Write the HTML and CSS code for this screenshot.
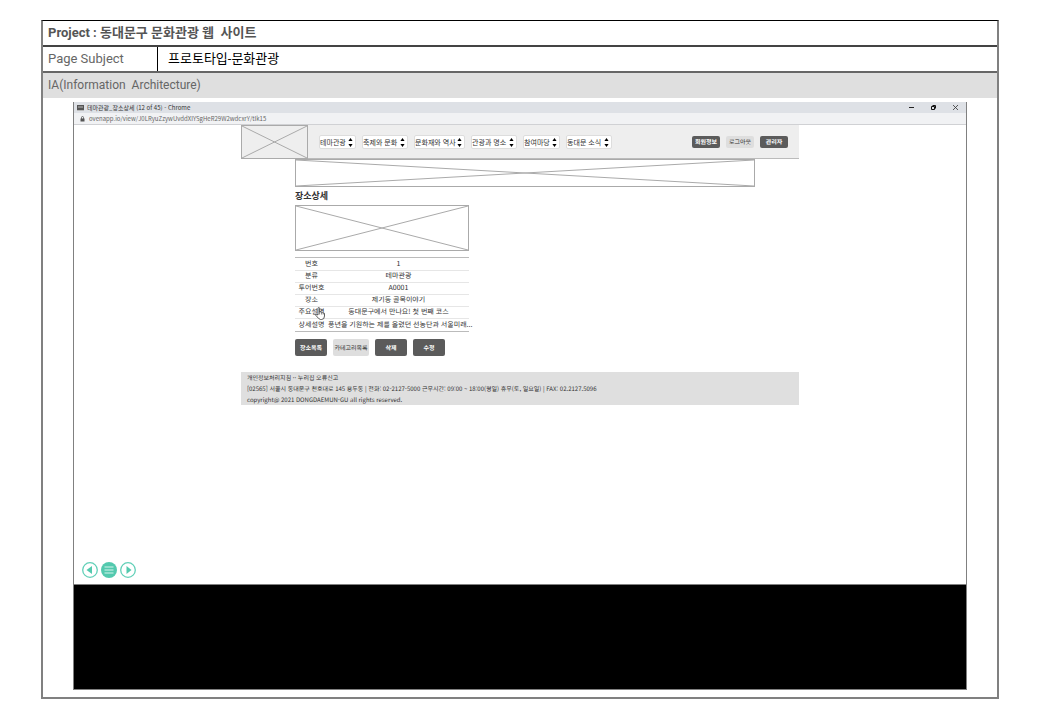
FILE: index.html
```html
<!DOCTYPE html>
<html lang="ko">
<head>
<meta charset="utf-8">
<title>동대문구 문화관광 웹 사이트</title>
<link rel="stylesheet" href="styles.css">
</head>
<body>
<div class="sheet">
  <h1 class="project">Project : 동대문구 문화관광 웹&nbsp; 사이트</h1>
  <div class="subject">
    <div class="subject-label">Page Subject</div>
    <div class="subject-value">프로토타입-문화관광</div>
  </div>
  <h2 class="section">IA(Information&nbsp; Architecture)</h2>
  <div class="window">
    <div class="titlebar">
      <svg class="tab-icon" viewBox="0 0 7 6"><rect width="7" height="5" fill="#555"/><path d="M1 2h5M0 5.5h7" stroke="#bbb"/></svg>
      <span class="tab-title">테마관광_장소상세 (12 of 45) - Chrome</span>
      <div class="controls">
        <svg viewBox="0 0 7 7"><path d="M1 3.5h5" stroke="#222"/></svg>
        <svg viewBox="0 0 7 7"><path d="M2.5 1.5h3v3M1.5 2.5h3v3h-3z" fill="none" stroke="#111"/></svg>
        <svg viewBox="0 0 7 7"><path d="M1 1l5 5M6 1L1 6" stroke="#333" stroke-width=".8"/></svg>
      </div>
    </div>
    <div class="urlbar">
      <svg class="lock" viewBox="0 0 5 6"><path d="M1.5 3V1.5a1 1 0 0 1 2 0V3" fill="none" stroke="#555" stroke-width=".8"/><rect x=".5" y="2.5" width="4" height="3" fill="#555"/></svg>
      <span>ovenapp.io/view/J0LRyuZzywUvddXIYSgHeR29W2wdcxrY/tIk15</span>
    </div>
    <div class="viewport">
      <div class="page">
        <header class="site-header">
          <svg class="crossed logo" viewBox="0 0 100 100" preserveAspectRatio="none"><path d="M0 0L100 100M100 0L0 100"/></svg>
          <nav class="menu">
            <label class="pick short"><select aria-label="테마관광"><option>테마관광</option></select><svg viewBox="0 0 5 9"><path d="M2.5 0L4.6 3H.4zM2.5 9L4.6 6H.4z"/></svg></label>
            <label class="pick medium"><select aria-label="축제와 문화"><option>축제와 문화</option></select><svg viewBox="0 0 5 9"><path d="M2.5 0L4.6 3H.4zM2.5 9L4.6 6H.4z"/></svg></label>
            <label class="pick long"><select aria-label="문화재와 역사"><option>문화재와 역사</option></select><svg viewBox="0 0 5 9"><path d="M2.5 0L4.6 3H.4zM2.5 9L4.6 6H.4z"/></svg></label>
            <label class="pick medium"><select aria-label="관광과 명소"><option>관광과 명소</option></select><svg viewBox="0 0 5 9"><path d="M2.5 0L4.6 3H.4zM2.5 9L4.6 6H.4z"/></svg></label>
            <label class="pick short"><select aria-label="참여마당"><option>참여마당</option></select><svg viewBox="0 0 5 9"><path d="M2.5 0L4.6 3H.4zM2.5 9L4.6 6H.4z"/></svg></label>
            <label class="pick medium"><select aria-label="동대문 소식"><option>동대문 소식</option></select><svg viewBox="0 0 5 9"><path d="M2.5 0L4.6 3H.4zM2.5 9L4.6 6H.4z"/></svg></label>
          </nav>
          <div class="account">
            <button class="btn small">회원정보</button>
            <button class="btn small light">로그아웃</button>
            <button class="btn small">관리자</button>
          </div>
        </header>
        <main class="content">
          <svg class="crossed banner" viewBox="0 0 100 100" preserveAspectRatio="none"><path d="M0 0L100 100M100 0L0 100"/></svg>
          <section class="place">
            <h3>장소상세</h3>
            <svg class="crossed photo" viewBox="0 0 100 100" preserveAspectRatio="none"><path d="M0 0L100 100M100 0L0 100"/></svg>
            <table>
              <tr><th scope="row">번호</th><td>1</td></tr>
              <tr><th scope="row">분류</th><td>테마관광</td></tr>
              <tr><th scope="row">투어번호</th><td>A0001</td></tr>
              <tr><th scope="row">장소</th><td>제기동 골목이야기</td></tr>
              <tr><th scope="row" class="hovered">주요설명<svg class="hand" viewBox="0 0 10 13"><path d="M3 8V1.500q0-1 .8-1t.8 1V5q1.500-.6 2 .3 1.300-.4 1.600.5 1.300-.1 1.300 1V9q0 3.500-3 3.500H5.500Q4 12.500.7 8.200q-.3-1 .8-.9z" fill="#fff" stroke="#333" stroke-width=".8"/><path d="M4.600 5v2.500M6.600 5.500v2M8.200 6v1.500" stroke="#333" stroke-width=".6"/></svg></th><td>동대문구에서 만나요! 첫 번째 코스</td></tr>
              <tr><th scope="row">상세설명</th><td>풍년을 기원하는 제를 올렸던 선농단과 서울미래...</td></tr>
            </table>
            <div class="actions">
              <button class="btn">장소목록</button>
              <button class="btn light wide">카테고리목록</button>
              <button class="btn">삭제</button>
              <button class="btn">수정</button>
            </div>
          </section>
        </main>
        <footer class="site-footer">
          <p>개인정보처리지침 ·· 누리집 오류신고</p>
          <p>[02565] 서울시 동대문구 천호대로 145 용두동 | 전화: 02-2127-5000 근무시간: 09:00 ~ 18:00(평일) 휴무(토, 일요일) | FAX: 02.2127.5096</p>
          <p>copyright@ 2021 DONGDAEMUN-GU all rights reserved.</p>
        </footer>
      </div>
      <div class="pager">
        <button aria-label="이전"><svg viewBox="0 0 16 16"><circle cx="8" cy="8" r="7.300" fill="#fff" stroke="#62d0b8" stroke-width="1.300"/><path d="M4.500 8l5.500-4v8z" fill="#53c9ae"/></svg></button>
        <button aria-label="목록"><svg viewBox="0 0 16 16"><circle cx="8" cy="8" r="8" fill="#53c9ae"/><path d="M3.500 5h9M3.500 8h9M3.500 11h9" stroke="#d5f4ec" stroke-width="1.200"/></svg></button>
        <button aria-label="다음"><svg viewBox="0 0 16 16"><circle cx="8" cy="8" r="7.300" fill="#fff" stroke="#62d0b8" stroke-width="1.300"/><path d="M11.500 8L6.500 4v8z" fill="#53c9ae"/></svg></button>
      </div>
    </div>
    <div class="letterbox"></div>
  </div>
</div>
</body>
</html>
```
FILE: styles.css
```css
* { box-sizing: border-box; }
body {
  margin: 0;
  min-height: 100vh;
  padding: 20px 41px 21px;
  display: flex;
  background: #fff;
  color: #333;
  font-family: Roboto, "Noto Sans CJK KR", sans-serif;
}
h1, h2, h3, p { margin: 0; }
svg { display: block; }
button, select { font-family: inherit; margin: 0; }

.sheet {
  flex: 1;
  min-width: 0;
  display: flex;
  flex-direction: column;
  border: 2px solid #808080;
  border-top: 1px solid #000;
}
.project, .subject { font-size: 13px; line-height: 24px; }
.project {
  padding-left: 5px;
  color: #555;
  border-bottom: 2px solid #444;
}
.subject { display: flex; border-bottom: 2px solid #666; }
.subject-label {
  width: 115px;
  padding-left: 5px;
  color: #666;
  border-right: 1px solid #000;
}
.subject-value { padding-left: 10px; color: #000; }
.section {
  padding-left: 5px;
  font-size: 12px;
  line-height: 25px;
  font-weight: 400;
  color: #666;
  background: #dfdfdf;
}

.window {
  flex: 1;
  display: flex;
  flex-direction: column;
  margin: 4px 30px 7px;
  border: 1px solid #808080;
  border-top: 0;
  font-family: "Noto Sans CJK KR", sans-serif;
}
.titlebar, .urlbar {
  display: flex;
  align-items: center;
  font-size: 6px;
  line-height: 10px;
}
.titlebar { height: 11px; padding: 0 7px 0 3px; background: #dee1e6; }
.tab-icon { width: 7px; height: 6px; margin-right: 3px; }
.controls { display: flex; gap: 15px; margin-left: auto; }
.controls svg { width: 7px; height: 7px; }
.urlbar {
  height: 12px;
  padding-left: 6px;
  background: #f1f2f4;
  border-bottom: 1px solid #d0d1d4;
  color: #666;
}
.lock { width: 5px; height: 6px; margin-right: 4px; }

.viewport {
  flex: 1;
  display: flex;
  flex-direction: column;
  border-bottom: 1px solid #808080;
}
.page { width: 100%; max-width: 558px; margin: 0 auto; }
.crossed { border: 1px solid #aaa; }
.crossed path { stroke: #aaa; stroke-width: 1px; vector-effect: non-scaling-stroke; }

.site-header {
  display: flex;
  align-items: center;
  height: 34px;
  background: #eee;
  border-bottom: 1px solid #bbb;
}
.logo { width: 67px; height: 34px; }
.menu { display: flex; gap: 6px; margin-left: 11px; }
.pick { position: relative; }
.pick select {
  display: block;
  width: 100%;
  height: 14px;
  padding: 0;
  appearance: none;
  border: 1px solid #ddd;
  border-radius: 2px;
  background: #fff;
  color: #333;
  font-size: 7px;
  line-height: 12px;
}
.pick svg { position: absolute; right: 3px; top: 3px; width: 5px; height: 9px; pointer-events: none; }
.short { width: 37px; }
.medium { width: 46px; }
.long { width: 51px; }
.account { display: flex; gap: 6px; margin-left: auto; margin-right: 11px; }

.btn {
  width: 32px;
  height: 17px;
  padding: 0;
  border: 0;
  border-radius: 2px;
  background: #5b5b5b;
  color: #fff;
  font-size: 6px;
  line-height: 12px;
  font-weight: 700;
  white-space: nowrap;
  text-rendering: geometricPrecision;
}
.light { background: #dedede; color: #333; font-weight: 400; }
.small { width: 28px; height: 12px; }
.wide { width: 36px; }

.content { padding: 0 44px 0 54px; }
.banner { width: 100%; height: 28px; }
.place { width: 174px; }
.place h3 { font-size: 9px; line-height: 18px; }
.photo { width: 100%; height: 46px; }
table {
  width: 100%;
  margin-top: 6px;
  border-collapse: collapse;
  table-layout: fixed;
  border-top: 1px solid #bbb;
  border-bottom: 1px solid #bbb;
  font-size: 7px;
  line-height: 11px;
  text-align: center;
  text-rendering: geometricPrecision;
}
tr + tr { border-top: 1px solid #e6e6e6; }
th, td { height: 12px; padding: 0; font-weight: 400; white-space: nowrap; }
tr:first-child > *, tr:last-child > * { height: 13px; }
th { width: 33px; }
.hovered { position: relative; }
.hand { position: absolute; left: 20px; top: 0; width: 10px; height: 13px; }
.actions { display: flex; gap: 6px; margin-top: 7px; }

.site-footer {
  margin-top: 16px;
  padding: 0 6px;
  background: #dfdfdf;
  font-size: 6px;
  line-height: 11px;
  text-rendering: geometricPrecision;
}
.site-footer p { white-space: nowrap; }

.pager { display: flex; gap: 3px; margin-top: auto; padding: 0 8px 6px; }
.pager button { width: 16px; height: 16px; padding: 0; border: 0; background: none; }
.pager svg { width: 16px; height: 16px; }
.letterbox { height: 104px; background: #000; }
```
